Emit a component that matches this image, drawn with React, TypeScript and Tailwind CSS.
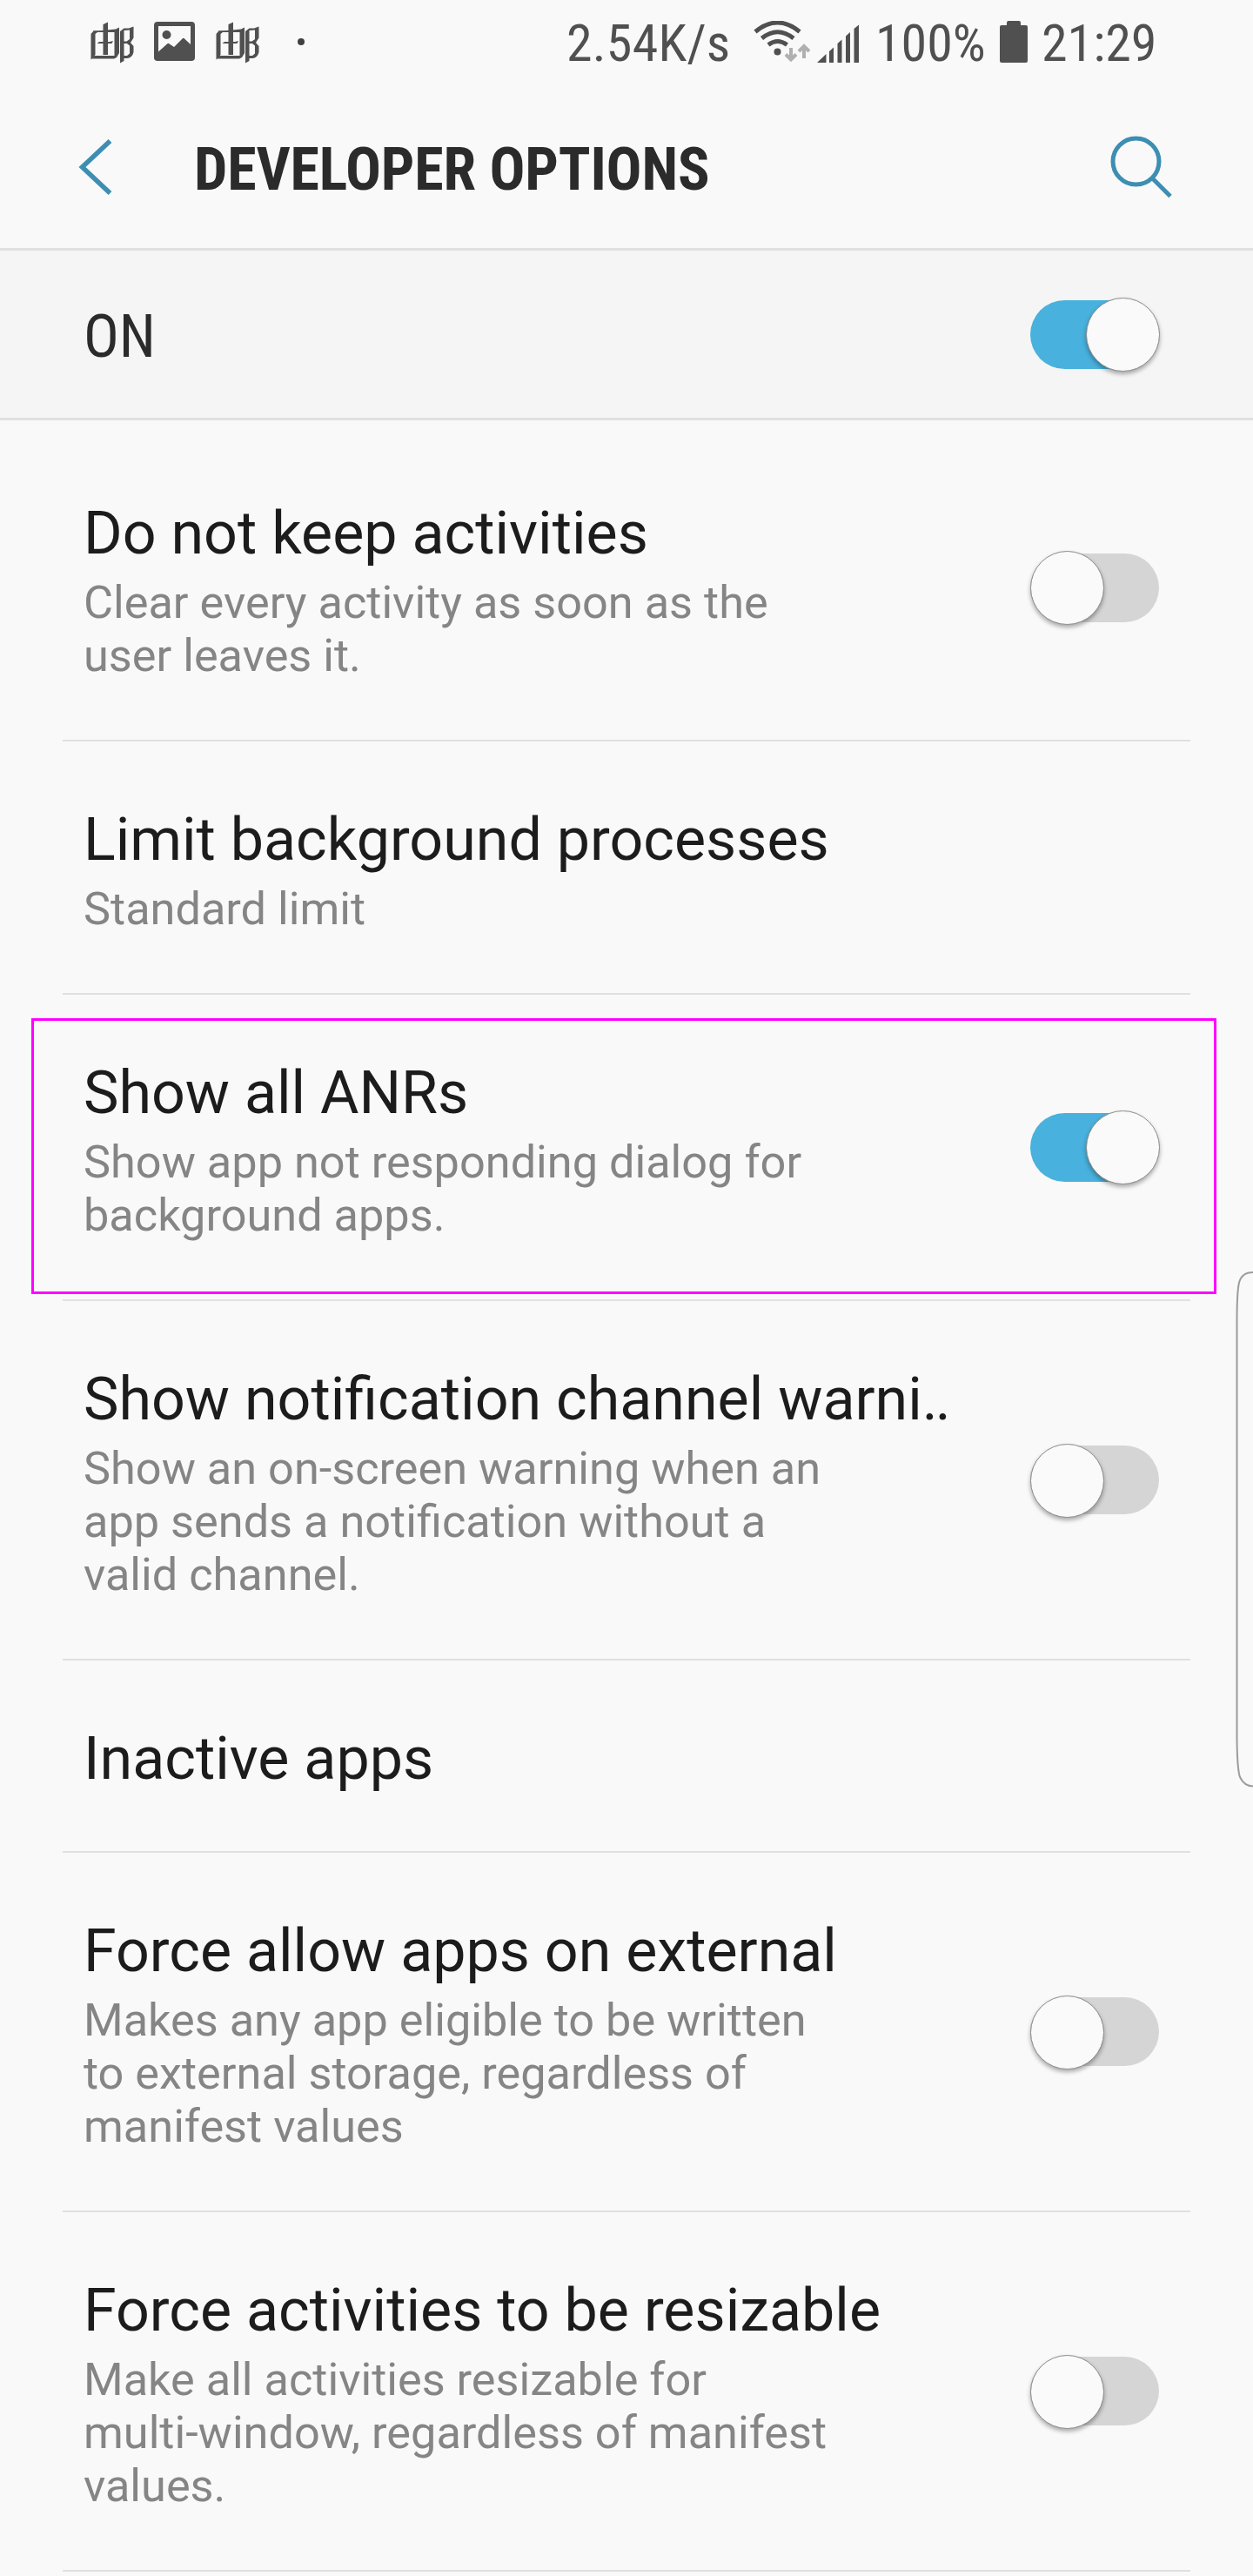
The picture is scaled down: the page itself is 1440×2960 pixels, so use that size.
import React from "react";

type Row = { title: string; truncated?: boolean; lines?: string[]; on?: boolean; marked?: boolean };

const rows: Row[] = [
  { title: "Do not keep activities", lines: ["Clear every activity as soon as the", "user leaves it."], on: false },
  { title: "Limit background processes", lines: ["Standard limit"] },
  { title: "Show all ANRs", lines: ["Show app not responding dialog for", "background apps."], on: true, marked: true },
  {
    title: "Show notification channel warni",
    truncated: true,
    lines: ["Show an on-screen warning when an", "app sends a notification without a", "valid channel."],
    on: false,
  },
  { title: "Inactive apps" },
  {
    title: "Force allow apps on external",
    lines: ["Makes any app eligible to be written", "to external storage, regardless of", "manifest values"],
    on: false,
  },
  {
    title: "Force activities to be resizable",
    lines: ["Make all activities resizable for", "multi-window, regardless of manifest", "values."],
    on: false,
  },
];

function Switch({ on }: { on: boolean }) {
  return (
    <div className="relative flex h-[84px] w-[149px] shrink-0 items-center">
      <div className={on ? "h-[79px] w-[148px] rounded-full bg-[#49b1dd]" : "h-[79px] w-[148px] rounded-full bg-[#d5d5d5]"} />
      <div
        className={
          (on ? "right-0" : "left-0") +
          " absolute top-0 h-[85px] w-[85px] rounded-full border border-[#8c8c8c] bg-[#fafafa] shadow-[0_3px_5px_rgba(0,0,0,0.32)]"
        }
      />
    </div>
  );
}

function MailGlyph() {
  return (
    <svg className="h-[50px] w-[52px]" viewBox="0 0 52 50" fill="#505050">
      <path d="M0.500 14L3.500 10.500H8L4.500 14.500V38L6 39.500L0.500 43.500Z" />
      <path d="M3 10.500L14 10L29 8.500L33 6.500V36L30 41L27 42.500H2L5.500 39H27.500V12H8L5.500 14V38H4Z" />
      <path d="M14.500 3L20 0.500V38H14.500Z" />
      <path d="M7.500 25L10 23H22L26 22L24.500 25Z" />
      <path d="M34 11L38.500 7.500L44 7.500L49.500 5.500V18.500L46 24L49.500 28V35Q48 41.500 42 42H38.500V45L34 47.500ZM38.500 10V22.500H41.500L45 20V9.500ZM38.500 25V39H42L45 36.500V27.500L42 25Z" fillRule="evenodd" />
    </svg>
  );
}

export default function App() {
  return (
    <div className="relative flex h-[2960px] w-[1440px] flex-col overflow-hidden bg-[#f9f9f9] font-['Roboto','Liberation_Sans',sans-serif] text-[#1c1c1c]">
      <div className="flex h-[100px] items-start pl-[104px] text-[#505050]">
        <div className="flex w-[546px] items-start pt-[25px]">
          <MailGlyph />
          <svg className="ml-[21px] h-[46px] w-[47px]" viewBox="0 0 47 46">
            <rect width="47" height="45" rx="4" fill="#505050" />
            <path d="M5 5H42V26L34.500 19Q33.500 18.500 32.500 19.500L23 29L17 25Q16 24.500 15 25.500L5 34.500Z" fill="#f9f9f9" />
            <circle cx="14.500" cy="15" r="5" fill="#505050" />
          </svg>
          <div className="ml-6">
            <MailGlyph />
          </div>
          <div className="mt-[19px] ml-[42px] h-2 w-2 rounded-full bg-[#404040]" />
        </div>
        <span className="mt-[15px] block w-[216px] pl-px font-['Roboto_Condensed'] text-[60px] leading-[70px] tracking-[0.2px] whitespace-nowrap">2.54K/s</span>
        <svg className="mt-6 h-[49px] w-[127px] shrink-0" viewBox="866 24 127 49">
          <g fill="none" stroke="#505050" strokeWidth="5">
            <path d="M868 36.500Q893.500 15.500 919 36.500" />
            <path d="M875.500 44Q893.500 29.500 912 44" />
            <path d="M883 51.500Q893.500 43.500 904.500 51.500" />
          </g>
          <circle cx="893.500" cy="59.500" r="4" fill="#505050" />
          <path d="M909 55v13M903 62.500l6 6 6-6M924 67V54M918 59l6-6 6 6" fill="none" stroke="#b0b0b0" strokeWidth="4" />
          <path d="M939 72L949.500 62V72ZM953 59L958 54.500V72H953ZM962.500 50L967.500 45.500V72H962.500ZM972 41.500L977 37V72H972ZM981.500 33L987 28.500V72H981.500Z" fill="#505050" />
        </svg>
        <span className="mt-[15px] ml-[13px] block w-[143px] font-['Roboto_Condensed'] text-[60px] leading-[70px]">100%</span>
        <svg className="mt-6 h-12 w-8 shrink-0" viewBox="0 0 32 48" fill="#505050">
          <path d="M8 5V2Q8 0 10 0H22Q24 0 24 2V5H30Q32 5 32 7V46Q32 48 30 48H2Q0 48 0 46V7Q0 5 2 5Z" />
        </svg>
        <span className="mt-[15px] ml-4 block font-['Roboto_Condensed'] text-[60px] leading-[70px]">21:29</span>
      </div>

      <header className="flex h-[185px] shrink-0 items-start">
        <svg className="mt-[60px] ml-[90px] h-16 w-[39px]" viewBox="0 0 39 64">
          <path d="M36.500 2L4.500 32L36.500 62" fill="none" stroke="#3d8eb2" strokeWidth="5.500" />
        </svg>
        <h1 className="mt-[55px] ml-[94px] font-['Roboto_Condensed'] text-[68px] leading-[80px] font-bold tracking-[-0.18px] whitespace-nowrap text-[#2b2b2b]">DEVELOPER OPTIONS</h1>
        <svg className="mt-[55px] mr-[92px] ml-auto h-[74px] w-[73px]" viewBox="0 0 73 74" fill="none" stroke="#3d8eb2" strokeWidth="5">
          <circle cx="30.500" cy="30.500" r="26.500" />
          <path d="M49.500 50L70 70.500" />
        </svg>
      </header>

      <div className="flex h-[198px] shrink-0 items-center justify-between border-y-[3px] border-[#e0e0e0] bg-[#f5f5f5] pr-[107px] pl-24">
        <span className="pt-[5px] font-['Roboto_Condensed'] text-[68px] leading-[80px] text-[#2b2b2b]">ON</span>
        <Switch on />
      </div>

      <main className="mx-[72px] pt-[17px]">
        {rows.map((row) => (
          <section
            key={row.title}
            className={
              (row.lines ? "pb-[66px]" : "pb-[66px]") +
              " relative flex items-center justify-between border-b-2 border-[#e0e0e0] pt-[73px] pr-[35px] pl-6"
            }
          >
            <div>
              <h2 className="text-[68.15px] leading-[80px] whitespace-nowrap">
                {row.title}
                {row.truncated && <span className="tracking-[-3px]">..</span>}
              </h2>
              {row.lines && (
                <p className="mt-[9px] text-[52.28px] leading-[61px] whitespace-nowrap text-[#858585]">
                  {row.lines.map((line) => (
                    <span key={line} className="block">{line}</span>
                  ))}
                </p>
              )}
            </div>
            {row.on !== undefined && (
              <div className="-mt-[73px] -mb-[66px]">
                <Switch on={row.on} />
              </div>
            )}
            {row.marked && <div className="absolute top-[27px] -right-[30px] -left-9 h-[317px] border-[3px] border-[#ff00ff]" />}
          </section>
        ))}
      </main>

      <svg className="absolute top-[1460px] left-[1418px] h-[596px] w-[22px]" viewBox="0 0 22 596" fill="none" stroke="#9c9c9c" strokeWidth="2">
        <path d="M22 2Q9 2 6 14Q3.500 24 3.500 60V530Q3.500 572 7 582Q12 592.500 22 592.500" />
      </svg>
    </div>
  );
}
